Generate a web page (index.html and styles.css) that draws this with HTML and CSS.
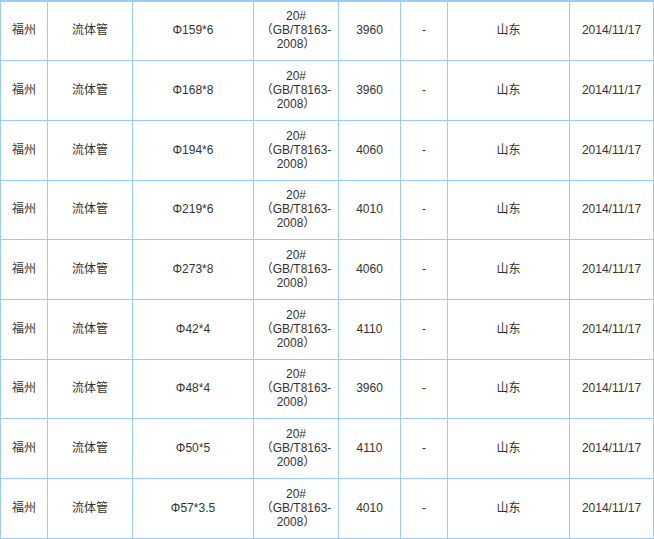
FILE: index.html
```html
<!DOCTYPE html>
<html lang="zh-CN">
<head>
<meta charset="utf-8">
<title>流体管价格</title>
<link rel="stylesheet" href="styles.css">
</head>
<body>
<div class="price-table">
  <div class="row r59"><div class="c">福州</div><div class="c">流体管</div><div class="c">Φ159*6</div><div class="c spec">20#<br>（GB/T8163-<br>2008）</div><div class="c">3960</div><div class="c">-</div><div class="c">山东</div><div class="c">2014/11/17</div></div>
  <div class="row"><div class="c">福州</div><div class="c">流体管</div><div class="c">Φ168*8</div><div class="c spec">20#<br>（GB/T8163-<br>2008）</div><div class="c">3960</div><div class="c">-</div><div class="c">山东</div><div class="c">2014/11/17</div></div>
  <div class="row"><div class="c">福州</div><div class="c">流体管</div><div class="c">Φ194*6</div><div class="c spec">20#<br>（GB/T8163-<br>2008）</div><div class="c">4060</div><div class="c">-</div><div class="c">山东</div><div class="c">2014/11/17</div></div>
  <div class="row r59"><div class="c">福州</div><div class="c">流体管</div><div class="c">Φ219*6</div><div class="c spec">20#<br>（GB/T8163-<br>2008）</div><div class="c">4010</div><div class="c">-</div><div class="c">山东</div><div class="c">2014/11/17</div></div>
  <div class="row"><div class="c">福州</div><div class="c">流体管</div><div class="c">Φ273*8</div><div class="c spec">20#<br>（GB/T8163-<br>2008）</div><div class="c">4060</div><div class="c">-</div><div class="c">山东</div><div class="c">2014/11/17</div></div>
  <div class="row"><div class="c">福州</div><div class="c">流体管</div><div class="c">Φ42*4</div><div class="c spec">20#<br>（GB/T8163-<br>2008）</div><div class="c">4110</div><div class="c">-</div><div class="c">山东</div><div class="c">2014/11/17</div></div>
  <div class="row r59"><div class="c">福州</div><div class="c">流体管</div><div class="c">Φ48*4</div><div class="c spec">20#<br>（GB/T8163-<br>2008）</div><div class="c">3960</div><div class="c">-</div><div class="c">山东</div><div class="c">2014/11/17</div></div>
  <div class="row"><div class="c">福州</div><div class="c">流体管</div><div class="c">Φ50*5</div><div class="c spec">20#<br>（GB/T8163-<br>2008）</div><div class="c">4110</div><div class="c">-</div><div class="c">山东</div><div class="c">2014/11/17</div></div>
  <div class="row"><div class="c">福州</div><div class="c">流体管</div><div class="c">Φ57*3.5</div><div class="c spec">20#<br>（GB/T8163-<br>2008）</div><div class="c">4010</div><div class="c">-</div><div class="c">山东</div><div class="c">2014/11/17</div></div>
</div>
</body>
</html>
```

FILE: styles.css
```css
html, body {
  margin: 0;
  padding: 0;
  background: #ffffff;
}

.price-table {
  width: 654px;
  box-sizing: border-box;
  border-top: 2px solid #99ccff;
  border-left: 1px solid #99ccff;
  font-family: "Liberation Sans", "Noto Sans CJK SC", sans-serif;
  font-size: 12px;
  color: #333333;
}

.row {
  display: grid;
  grid-template-columns: 47px 85px 121px 85px 62px 47px 122px 84px;
  height: 60px;
}

.row.r59 {
  height: 59px;
}

.c {
  box-sizing: border-box;
  border-right: 1px solid #99ccff;
  border-bottom: 1px solid #99ccff;
  padding-bottom: 2px;
  display: flex;
  align-items: center;
  justify-content: center;
  text-align: center;
  line-height: 14px;
  white-space: nowrap;
}

.spec {
  line-height: 14px;
}
```
